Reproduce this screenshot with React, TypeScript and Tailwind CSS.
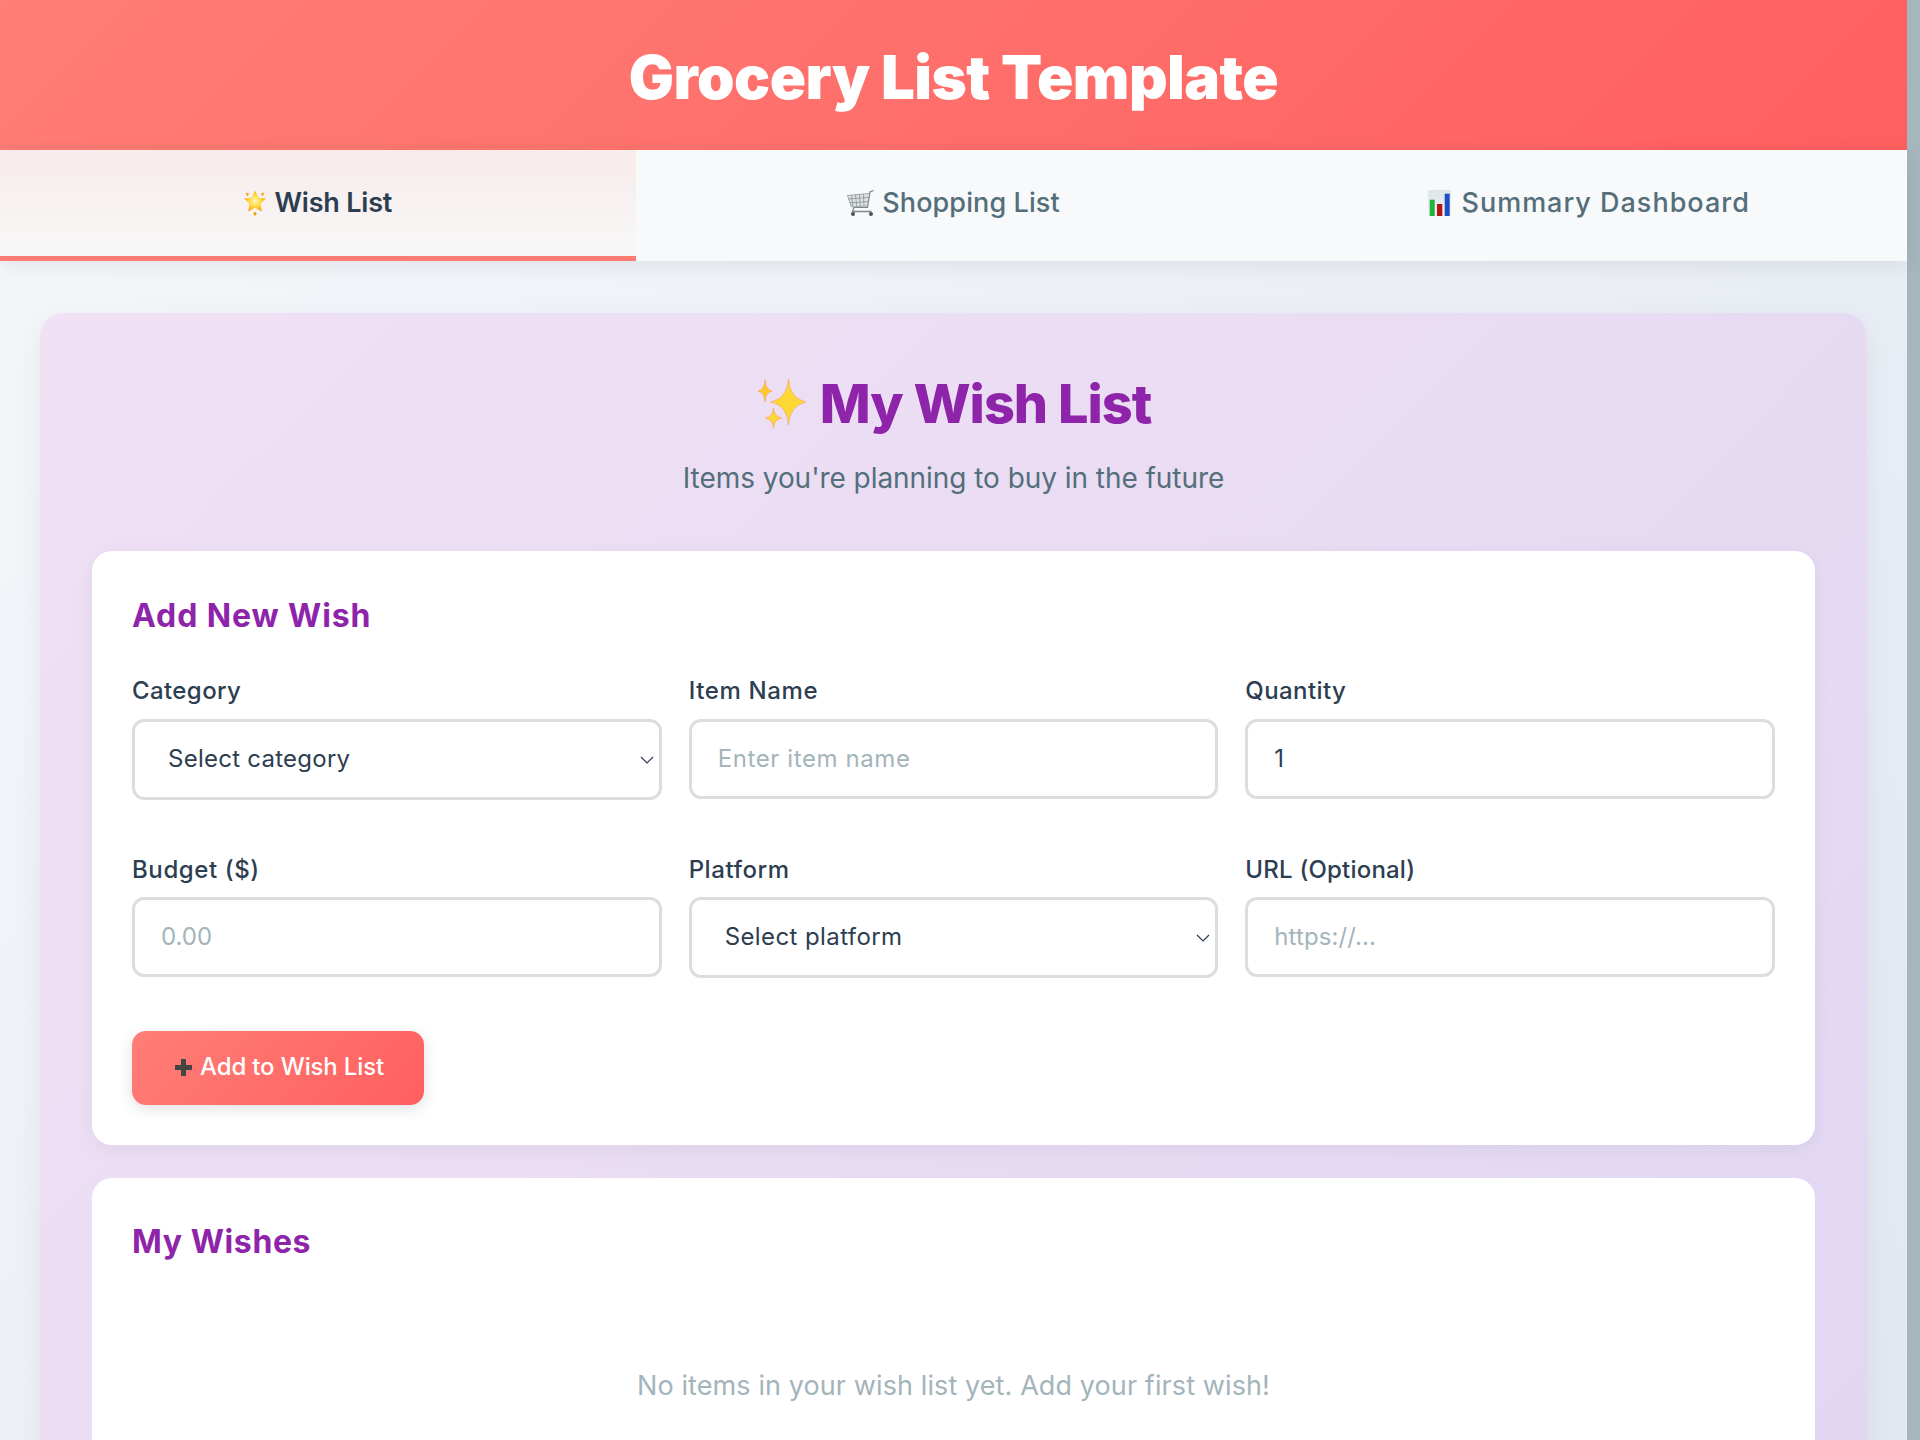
const font = "font-['Inter','Liberation_Sans',sans-serif]";

function Star4({ cx, cy, rx, ry, fill }: { cx: number; cy: number; rx: number; ry: number; fill: string }) {
  const kx = rx * 0.14;
  const ky = ry * 0.14;
  return (
    <path
      d={`M${cx} ${cy - ry}Q${cx + kx * 0.5} ${cy - ky} ${cx + rx} ${cy}Q${cx + kx * 0.5} ${cy + ky} ${cx} ${cy + ry}Q${cx - kx * 0.5} ${cy + ky} ${cx - rx} ${cy}Q${cx - kx * 0.5} ${cy - ky} ${cx} ${cy - ry}Z`}
      fill={fill}
      stroke="#fb923c"
      strokeWidth="0.5"
    />
  );
}

function Sparkles() {
  return (
    <svg width="50" height="50" viewBox="0 0 50 50" className="shrink-0">
      <Star4 cx={32.5} cy={23} rx={18} ry={23} fill="#fdd835" />
      <Star4 cx={9} cy={12} rx={7} ry={11} fill="#fdc92f" />
      <Star4 cx={17.5} cy={39} rx={8} ry={10} fill="#fdd835" />
    </svg>
  );
}

function GlowStar() {
  return (
    <svg width="24" height="26" viewBox="0 0 24 26" className="shrink-0">
      <defs>
        <radialGradient id="glow" cx="50%" cy="50%" r="55%">
          <stop offset="0%" stopColor="#fff9c0" />
          <stop offset="50%" stopColor="#ffd93b" />
          <stop offset="100%" stopColor="#f59a12" />
        </radialGradient>
      </defs>
      <path d="M2.500 2.500l3.500 1-1.500 3zM21.500 2.500L18 3.500l1.500 3zM12 21.500l1.800 2.300L12 26l-1.800-2.200z" fill="#f59e0b" />
      <path d="M12 0.500l3.300 6.900 7.700 1.100-5.500 5.300 1.300 7.600L12 17.800l-6.800 3.600 1.300-7.600L1 8.500l7.700-1.100z" fill="url(#glow)" strokeLinejoin="round" />
    </svg>
  );
}

function Cart() {
  return (
    <svg width="27" height="26" viewBox="0 0 27 26" className="shrink-0" fill="none" stroke="#7d868c">
      <path d="M26.500 0.500L23 2 20.500 17.500H7" strokeWidth="1.200" />
      <path d="M0.500 5.500l22-2-2 12.500-16 1z" fill="#dfe2e4" strokeWidth="0.700" />
      <path d="M4.500 5.200l1.500 11.500M8.500 4.800l1.200 11.700M12.500 4.400l.8 11.800M16.500 4l.5 12M1.500 9l20.500-1.700M2.500 13l18.800-1.500" strokeWidth="0.700" />
      <path d="M7 17.500l-1.500 4h19" strokeWidth="1.300" />
      <circle cx="6" cy="24" r="2" fill="#4b5158" stroke="none" />
      <circle cx="24" cy="24" r="2" fill="#4b5158" stroke="none" />
    </svg>
  );
}

function Chart() {
  return (
    <svg width="23" height="26" viewBox="0 0 23 26" className="shrink-0">
      <defs>
        <linearGradient id="chartbg" x1="0" y1="0" x2="0" y2="1">
          <stop offset="0%" stopColor="#dfe5ec" />
          <stop offset="100%" stopColor="#eef1f5" />
        </linearGradient>
      </defs>
      <rect width="23" height="26" fill="url(#chartbg)" />
      <rect x="1.700" y="9.700" width="5" height="16.300" fill="#22b33c" />
      <rect x="9" y="14" width="5.300" height="12" fill="#b91414" />
      <rect x="16.700" y="3.700" width="5" height="22.300" fill="#1d4fc4" />
    </svg>
  );
}

function Chevron() {
  return (
    <svg width="14" height="8" viewBox="0 0 14 8" fill="none" stroke="#2c3e50" strokeWidth="1.200" className="absolute right-[8px] top-[37px] pointer-events-none">
      <path d="M1 1l6 6 6-6" />
    </svg>
  );
}

function Label({ children, className }: { children: string; className: string }) {
  return <label className={`block h-[36px] text-[24px] leading-[36px] font-medium text-[#2c3e50] ${className}`}>{children}</label>;
}

const fieldClass = `block w-full rounded-[12px] border-[3px] border-[#dddddd] bg-white text-[24px] text-[#2c3e50] outline-none ${font}`;
const inputClass = "h-[80px] px-[26px] pb-[2px] placeholder:text-[#a4b4bb]";
const selectClass = "h-[81px] appearance-none pl-[33px] pr-[30px] pb-[1px]";

export default function App() {
  return (
    <div className={`flex h-[1440px] w-full overflow-hidden ${font}`}>
      <div className="flex-1 min-w-0 bg-[linear-gradient(135deg,#f5f7fa,#e2e7f1)]">
        <header className="h-[150px] flex items-center justify-center bg-[linear-gradient(135deg,#ff7e76,#ff5f5f)]">
          <h1 className="text-[60px] leading-[80px] font-black text-white tracking-[-0.55px] mt-[3px]">Grocery List Template</h1>
        </header>

        <nav className="grid grid-cols-3 h-[111px] bg-[#f8f9fa] shadow-[0_4px_20px_rgba(0,0,0,0.08)] relative">
          <div className="flex items-center justify-center gap-[7px] border-b-[5px] border-[#ff7b75] bg-gradient-to-b from-[#f8ebeb] to-[#f8f8f8]">
            <GlowStar />
            <span className="text-[27px] font-semibold text-[#2c3e50] tracking-[-0.2px]">Wish List</span>
          </div>
          <div className="flex items-center justify-center gap-[8px] pb-[5px]">
            <Cart />
            <span className="text-[27px] font-medium text-[#546e7a] tracking-[0.1px]">Shopping List</span>
          </div>
          <div className="flex items-center justify-center gap-[10px] pb-[5px]">
            <Chart />
            <span className="text-[27px] font-medium text-[#546e7a] tracking-[1px]">Summary Dashboard</span>
          </div>
        </nav>

        <main className="px-[40px] pt-[52px]">
          <section className="rounded-[24px] px-[52px] pt-[51px] bg-[linear-gradient(135deg,#f0e1f4,#e1d7f3)] shadow-[0_8px_30px_rgba(0,0,0,0.06)] h-[1200px]">
            <div className="flex items-center justify-center gap-[14px] h-[80px]">
              <Sparkles />
              <h2 className="text-[54px] leading-[80px] font-extrabold text-[#8e24aa] tracking-[-1px]">My Wish List</h2>
            </div>
            <p className="mt-[13px] h-[42px] mb-[52px] text-center text-[28px] leading-[42px] text-[#546e7a] tracking-[-0.05px]">Items you're planning to buy in the future</p>

            <div className="rounded-[20px] bg-white p-[40px] shadow-[0_4px_20px_rgba(0,0,0,0.05)] mb-[33px]">
              <h3 className="text-[32px] leading-[50px] font-bold text-[#8e24aa] mb-[32px] tracking-[0.9px]">Add New Wish</h3>
              <div className="grid grid-cols-3 gap-x-[27px] gap-y-[52px]">
                <div>
                  <Label className="mb-[10px] tracking-[0.4px]">Category</Label>
                  <div className="relative">
                    <select className={`${fieldClass} ${selectClass} tracking-[0.25px]`} defaultValue="">
                      <option value="">Select category</option>
                    </select>
                    <Chevron />
                  </div>
                </div>
                <div>
                  <Label className="mb-[10px] tracking-[0.65px]">Item Name</Label>
                  <input className={`${fieldClass} ${inputClass} tracking-[0.6px]`} placeholder="Enter item name" />
                </div>
                <div>
                  <Label className="mb-[10px] tracking-[0.4px]">Quantity</Label>
                  <input className={`${fieldClass} ${inputClass}`} defaultValue="1" />
                </div>
                <div>
                  <Label className="mb-[9px] tracking-[0.6px]">Budget ($)</Label>
                  <input className={`${fieldClass} ${inputClass}`} placeholder="0.00" />
                </div>
                <div>
                  <Label className="mb-[9px] tracking-[0.55px]">Platform</Label>
                  <div className="relative">
                    <select className={`${fieldClass} ${selectClass} tracking-[0.4px]`} defaultValue="">
                      <option value="">Select platform</option>
                    </select>
                    <Chevron />
                  </div>
                </div>
                <div>
                  <Label className="mb-[9px] tracking-[0.2px]">URL (Optional)</Label>
                  <input className={`${fieldClass} ${inputClass} tracking-[0.1px]`} placeholder="https://..." />
                </div>
              </div>
              <button className="mt-[53px] flex items-center justify-center gap-[8px] w-[292px] h-[74px] pb-[2px] pl-[3px] rounded-[14px] bg-[linear-gradient(135deg,#ff7e76,#ff5f5f)] text-white text-[24px] font-medium tracking-[-0.15px] shadow-[0_4px_15px_rgba(0,0,0,0.12)]">
                <svg width="17" height="17" viewBox="0 0 17 17" fill="#444444" className="shrink-0">
                  <path d="M6 0h5v6h6v5h-6v6H6v-6H0V6h6z" />
                </svg>
                <span>Add to Wish List</span>
              </button>
            </div>

            <div className="rounded-[20px] bg-white p-[40px] h-[400px]">
              <h3 className="text-[32px] leading-[48px] font-bold text-[#8e24aa] tracking-[0.6px]">My Wishes</h3>
              <p className="mt-[100px] text-center text-[27px] leading-[40px] text-[#a4b4bb] tracking-[0.1px]">No items in your wish list yet. Add your first wish!</p>
            </div>
          </section>
        </main>
      </div>
      <div className="w-[13px] shrink-0 bg-[#a6b6bd]" />
    </div>
  );
}
